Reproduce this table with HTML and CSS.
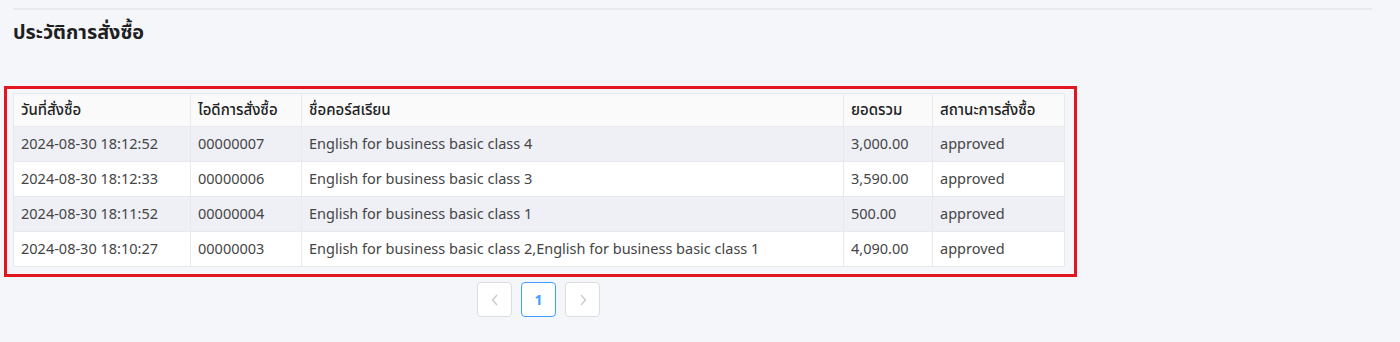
FILE: index.html
```html
<!DOCTYPE html>
<html lang="th">
<head>
<meta charset="utf-8">
<title>ประวัติการสั่งซื้อ</title>
<link rel="stylesheet" href="styles.css">
</head>
<body>
<div class="page">
  <hr class="divider">
  <h2 class="title">ประวัติการสั่งซื้อ</h2>
  <div class="highlight">
    <table class="orders">
      <colgroup>
        <col class="c-date">
        <col class="c-id">
        <col class="c-name">
        <col class="c-total">
        <col class="c-status">
      </colgroup>
      <thead>
        <tr>
          <th>วันที่สั่งซื้อ</th>
          <th>ไอดีการสั่งซื้อ</th>
          <th>ชื่อคอร์สเรียน</th>
          <th>ยอดรวม</th>
          <th>สถานะการสั่งซื้อ</th>
        </tr>
      </thead>
      <tbody>
        <tr>
          <td>2024-08-30 18:12:52</td>
          <td>00000007</td>
          <td>English for business basic class 4</td>
          <td>3,000.00</td>
          <td>approved</td>
        </tr>
        <tr>
          <td>2024-08-30 18:12:33</td>
          <td>00000006</td>
          <td>English for business basic class 3</td>
          <td>3,590.00</td>
          <td>approved</td>
        </tr>
        <tr>
          <td>2024-08-30 18:11:52</td>
          <td>00000004</td>
          <td>English for business basic class 1</td>
          <td>500.00</td>
          <td>approved</td>
        </tr>
        <tr>
          <td>2024-08-30 18:10:27</td>
          <td>00000003</td>
          <td>English for business basic class 2,English for business basic class 1</td>
          <td>4,090.00</td>
          <td>approved</td>
        </tr>
      </tbody>
    </table>
  </div>
  <nav class="pager">
    <button class="page-btn disabled" aria-label="previous">
      <svg width="10" height="14" viewBox="0 0 10 14"><path d="M7 2 L2.5 7 L7 12" fill="none" stroke="#c8c9cc" stroke-width="1.3"/></svg>
    </button>
    <button class="page-btn active">1</button>
    <button class="page-btn disabled" aria-label="next">
      <svg width="10" height="14" viewBox="0 0 10 14"><path d="M3 2 L7.5 7 L3 12" fill="none" stroke="#c8c9cc" stroke-width="1.3"/></svg>
    </button>
  </nav>
</div>
</body>
</html>
```
FILE: styles.css
```css
html, body {
  margin: 0;
  padding: 0;
  background: #f5f6fa;
}
body {
  font-family: "Noto Sans", "Noto Sans Thai", sans-serif;
  color: #454545;
  font-size: 14.5px;
}
.page {
  padding: 8px 28px 0 4px;
  width: 1368px;
}
.divider {
  border: 0;
  border-top: 2px solid #e9eaef;
  margin: 0 0 0 9px;
  height: 0;
}
.title {
  margin: 9px 0 0 9px;
  font-size: 19.8px;
  font-weight: 700;
  color: #1f1f1f;
  line-height: 26px;
}
.highlight {
  margin-top: 41px;
  border: 3px solid #e1161e;
  padding: 4px 9px 7px 6px;
  box-sizing: content-box;
  width: 1052px;
}
.orders {
  border-collapse: collapse;
  table-layout: fixed;
  width: 1051px;
  background: #fff;
}
.c-date { width: 177px; }
.c-id { width: 111px; }
.c-name { width: 542px; }
.c-total { width: 89px; }
.c-status { width: 132px; }
.orders th, .orders td {
  border: 1px solid #e8e9ee;
  text-align: left;
  padding: 0 7px 2px 7px;
  height: 32px;
  white-space: nowrap;
}
.orders th {
  font-weight: 500;
  font-size: 15px;
  color: #222;
  background: #fafafb;
  height: 31px;
  padding-top: 1px;
  padding-bottom: 0;
}
.orders tbody tr:nth-child(odd) td {
  background: #eef0f6;
}
.pager {
  display: flex;
  justify-content: center;
  gap: 9px;
  margin-top: 5px;
  width: 1069px;
}
.page-btn {
  width: 35px;
  height: 35px;
  border: 1px solid #dcdde0;
  border-radius: 4px;
  background: #fff;
  font-family: inherit;
  font-size: 14px;
  font-weight: 700;
  color: #409eff;
  display: flex;
  align-items: center;
  justify-content: center;
  padding: 0;
}
.page-btn.active {
  border-color: #409eff;
}
```
